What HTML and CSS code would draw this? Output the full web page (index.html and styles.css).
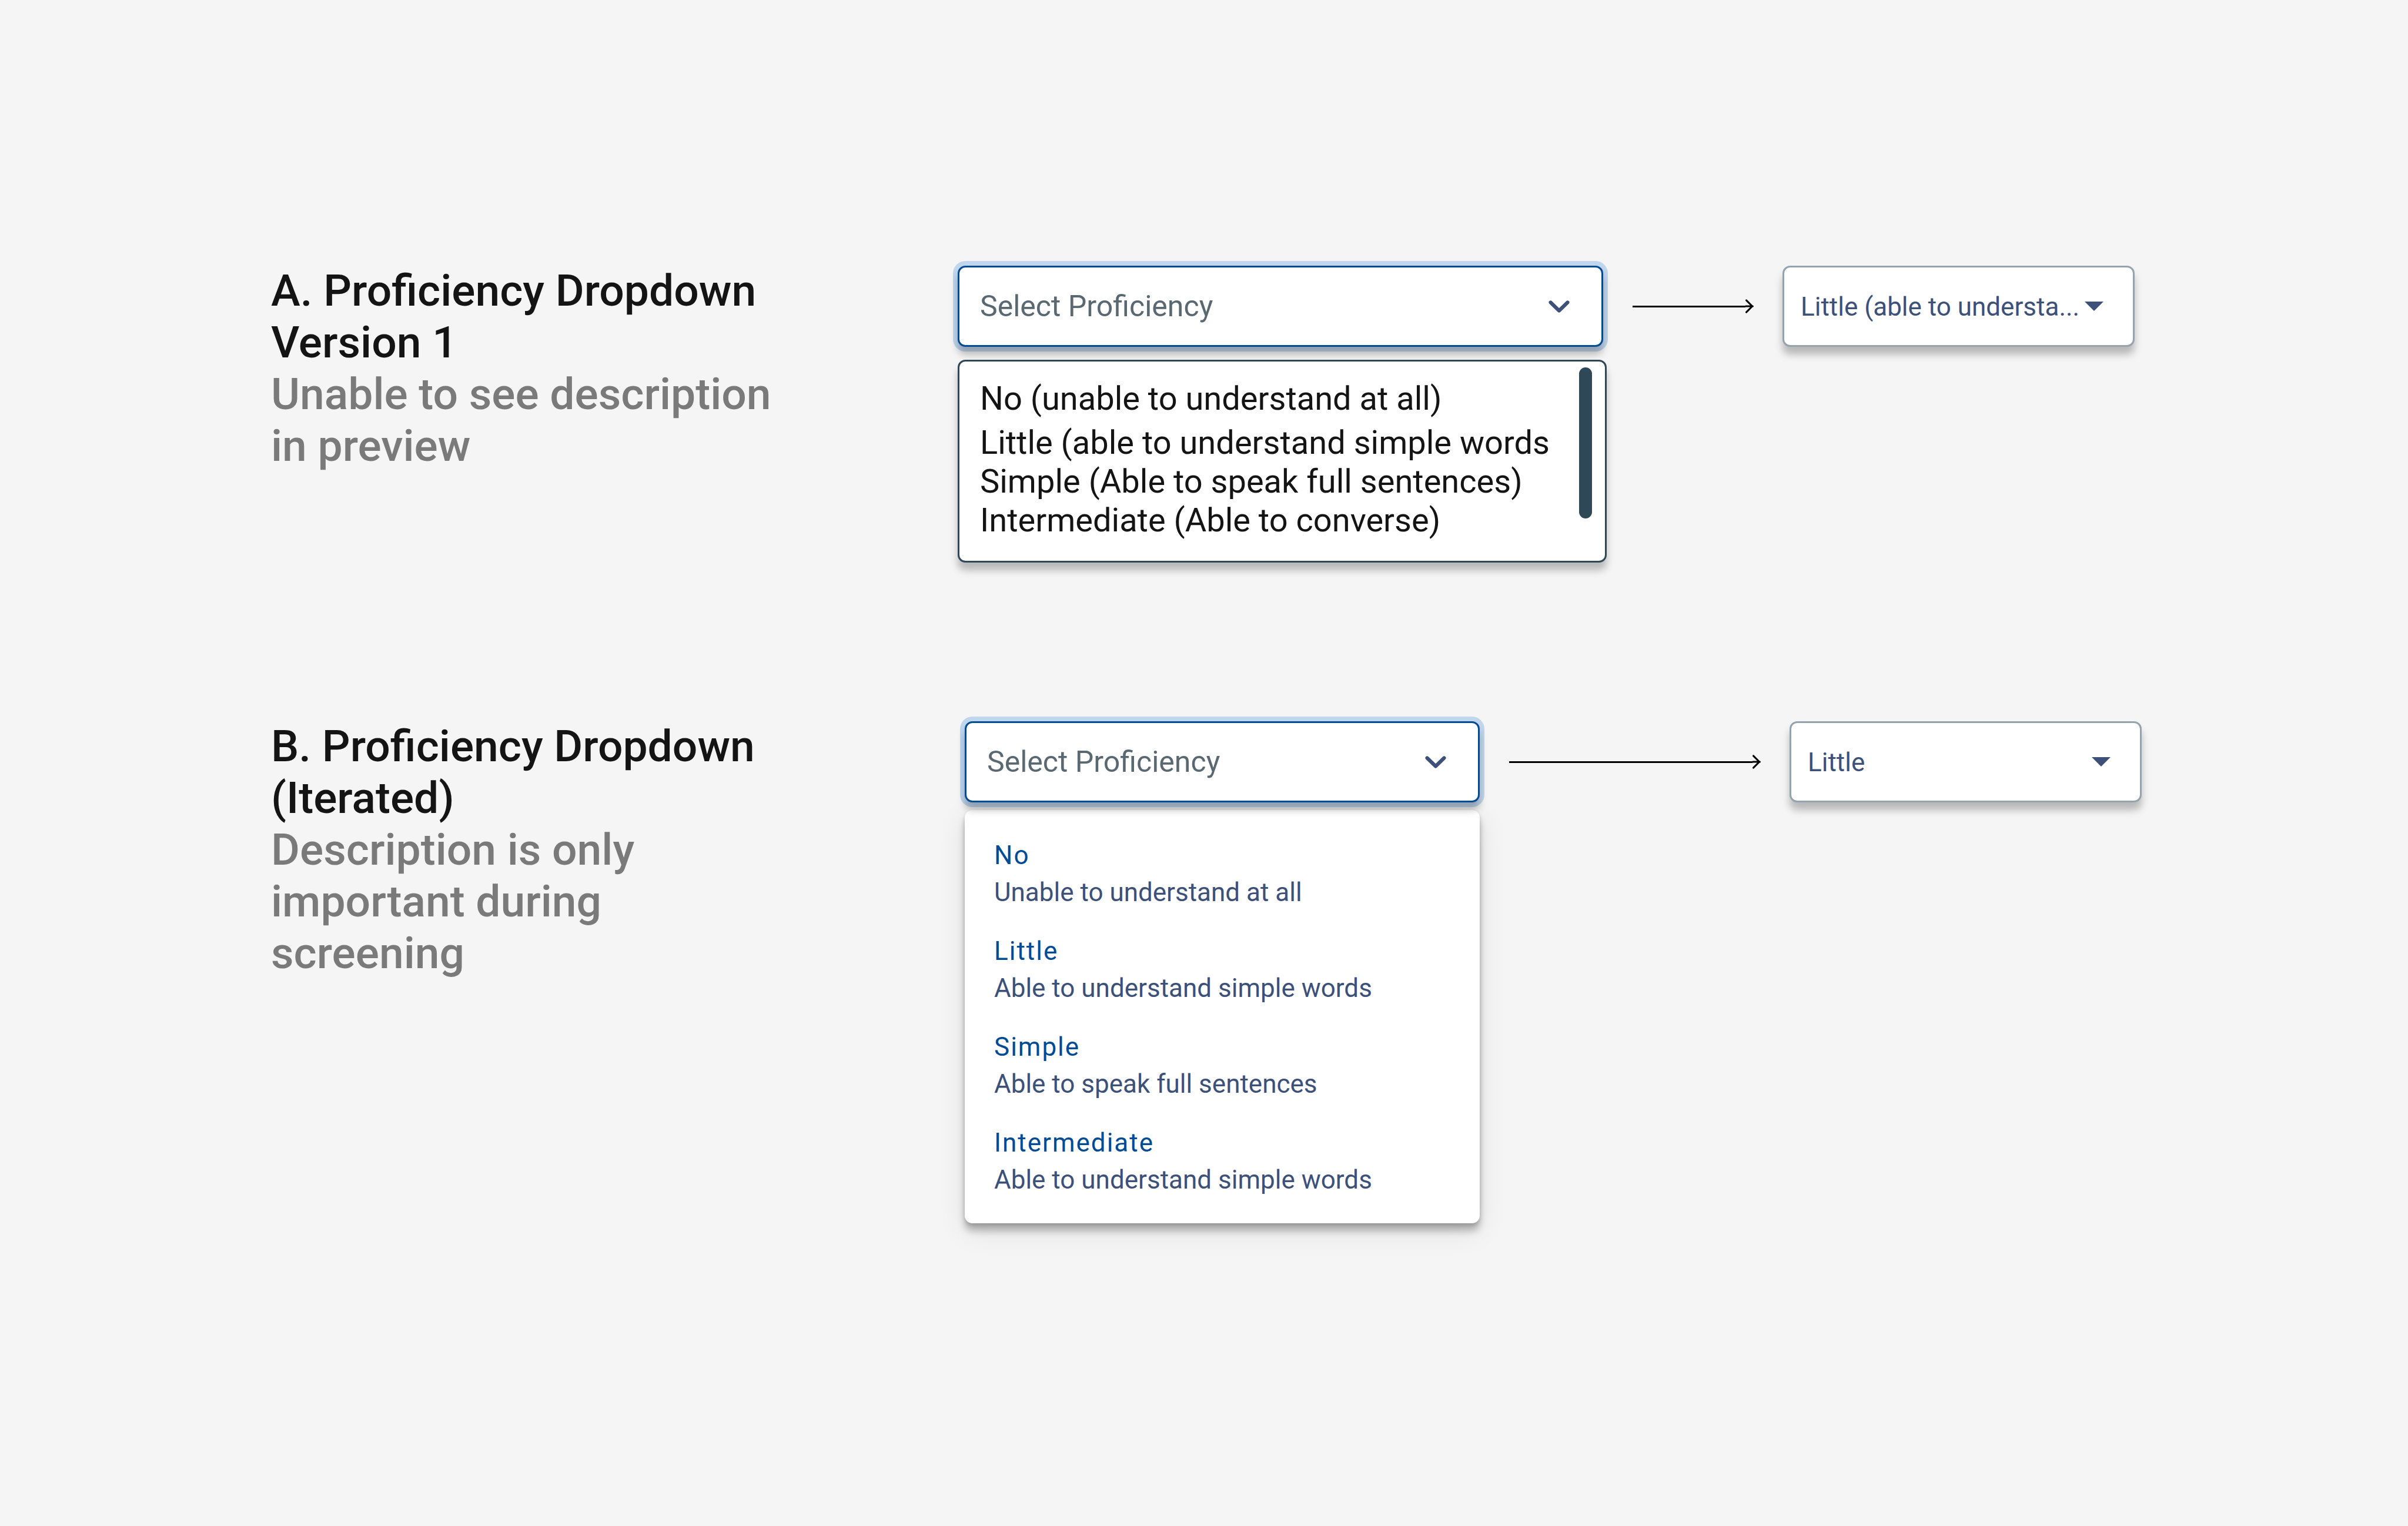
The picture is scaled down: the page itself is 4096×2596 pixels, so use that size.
FILE: index.html
```html
<!DOCTYPE html>
<html lang="en">
<head>
<meta charset="utf-8">
<title>Proficiency Dropdown</title>
<link rel="stylesheet" href="styles.css">
</head>
<body>
<main class="board">
  <section class="variant variant-a">
    <div class="caption">
      <h2 class="caption-title"><label for="proficiency-a">A. Proficiency Dropdown Version 1</label></h2>
      <p class="caption-note">Unable to see description in preview</p>
    </div>
    <div class="dropdown">
      <div class="field">
        <select class="control control-open" id="proficiency-a">
          <option>Select Proficiency</option>
        </select>
        <svg class="chevron" viewBox="0 0 46 27" aria-hidden="true"><path d="M4.500 4.500L23 22.500L41.500 4.500"/></svg>
      </div>
      <div class="list">
        <ul class="list-options">
          <li class="list-option">No (unable to understand at all)</li>
          <li class="list-option">Little (able to understand simple words</li>
          <li class="list-option">Simple (Able to speak full sentences)</li>
          <li class="list-option">Intermediate (Able to converse)</li>
        </ul>
        <span class="scrollbar"></span>
      </div>
    </div>
    <div class="arrow">
      <span class="arrow-line"></span>
      <svg class="arrow-head" viewBox="0 0 18 30" aria-hidden="true"><path d="M0 15H16M2 2L15 15L2 28"/></svg>
    </div>
    <div class="field">
      <select class="control control-preview" aria-label="Selected proficiency, version 1">
        <option>Little (able to understa...</option>
      </select>
      <svg class="caret" viewBox="0 0 40 20" aria-hidden="true"><path d="M0 0H40L20 20Z"/></svg>
    </div>
  </section>

  <section class="variant variant-b">
    <div class="caption">
      <h2 class="caption-title"><label for="proficiency-b">B. Proficiency Dropdown (Iterated)</label></h2>
      <p class="caption-note">Description is only important during screening</p>
    </div>
    <div class="dropdown">
      <div class="field">
        <select class="control control-open" id="proficiency-b">
          <option>Select Proficiency</option>
        </select>
        <svg class="chevron" viewBox="0 0 46 27" aria-hidden="true"><path d="M4.500 4.500L23 22.500L41.500 4.500"/></svg>
      </div>
      <ul class="menu">
        <li class="menu-item"><span class="menu-name">No</span><span class="menu-text">Unable to understand at all</span></li>
        <li class="menu-item"><span class="menu-name">Little</span><span class="menu-text">Able to understand simple words</span></li>
        <li class="menu-item"><span class="menu-name">Simple</span><span class="menu-text">Able to speak full sentences</span></li>
        <li class="menu-item"><span class="menu-name">Intermediate</span><span class="menu-text">Able to understand simple words</span></li>
      </ul>
    </div>
    <div class="arrow">
      <span class="arrow-line"></span>
      <svg class="arrow-head" viewBox="0 0 18 30" aria-hidden="true"><path d="M0 15H16M2 2L15 15L2 28"/></svg>
    </div>
    <div class="field">
      <select class="control control-preview" aria-label="Selected proficiency, iterated">
        <option>Little</option>
      </select>
      <svg class="caret" viewBox="0 0 40 20" aria-hidden="true"><path d="M0 0H40L20 20Z"/></svg>
    </div>
  </section>
</main>
</body>
</html>
```
FILE: styles.css
```css
:root {
  --ink: #141414;
  --muted: #7a7a7a;
  --blue: #004b93;
  --slate: #3d5078;
  --teal: #2f4858;
  --shadow: 0 13px 13px rgba(0, 0, 0, 0.25);
}

* {
  box-sizing: border-box;
}

body {
  margin: 0;
  background: #f5f5f5;
  color: var(--ink);
  font-family: Roboto, "Liberation Sans", sans-serif;
}

ul,
h2,
p {
  margin: 0;
  padding: 0;
  list-style: none;
}

.board {
  display: flex;
  flex-direction: column;
  gap: 270px;
  padding: 452px 0 452px 461px;
}

.variant {
  display: grid;
  align-items: start;
}

.variant-a {
  grid-template-columns: 1168fr 1098fr 305fr 599fr;
  margin-right: 465px;
}

.variant-b {
  grid-template-columns: 1180fr 876fr 527fr 599fr;
  margin-right: 453px;
}

.caption {
  max-width: 890px;
  margin-top: -2px;
  font-size: 75px;
  line-height: 88px;
}

.caption-title {
  font-size: 75px;
  font-weight: 500;
}

.caption-note {
  color: var(--muted);
  font-weight: 500;
}

.field {
  position: relative;
}

.control {
  display: block;
  appearance: none;
  width: 100%;
  height: 138px;
  margin: 0;
  border: 3px solid;
  border-radius: 13px;
  background: #fff;
  font-family: inherit;
  outline: none;
}

.control-open {
  padding: 0 96px 0 35px;
  border-color: var(--blue);
  color: #5a6872;
  font-size: 50px;
  box-shadow: var(--shadow), 0 0 0 8px #c0d6ec;
}

.control-preview {
  padding: 2px 84px 0 28px;
  border-color: #94a4ae;
  color: var(--slate);
  font-size: 44px;
  box-shadow: var(--shadow);
}

.chevron {
  position: absolute;
  top: 59px;
  right: 57px;
  width: 36px;
  height: 21px;
  fill: none;
  stroke: var(--slate);
  stroke-width: 8;
  stroke-linecap: round;
  stroke-linejoin: round;
  pointer-events: none;
}

.caret {
  position: absolute;
  top: 61px;
  right: 53px;
  width: 32px;
  height: 16px;
  fill: var(--slate);
  pointer-events: none;
}

.list {
  display: flex;
  justify-content: space-between;
  width: calc(100% + 6px);
  margin-top: 22px;
  padding: 0 22px 0 35px;
  border: 3px solid var(--teal);
  border-radius: 13px;
  background: #fff;
  box-shadow: var(--shadow);
}

.list-options {
  padding: 30px 0 36px;
}

.list-option {
  font-size: 56px;
  line-height: 66px;
  white-space: nowrap;
}

.list-option:first-child {
  margin-bottom: 9px;
}

.scrollbar {
  width: 22px;
  height: 257px;
  margin-top: 10px;
  border-radius: 11px;
  background: var(--teal);
}

.arrow {
  display: flex;
  align-items: center;
  height: 138px;
  padding: 0 49px 0 50px;
}

.arrow-line {
  flex: 1;
  height: 3px;
  background: #000;
}

.arrow-head {
  width: 14px;
  height: 24px;
  fill: none;
  stroke: #000;
  stroke-width: 4;
  stroke-linecap: round;
  stroke-linejoin: round;
}

.menu {
  display: flex;
  flex-direction: column;
  gap: 37px;
  margin-top: 13px;
  padding: 46px 50px 42px;
  border-radius: 13px;
  background: #fff;
  box-shadow: var(--shadow), 0 3px 6px rgba(0, 0, 0, 0.15), 0 13px 50px rgba(0, 0, 0, 0.09);
  font-size: 44px;
  line-height: 63px;
}

.menu-item {
  display: flex;
  flex-direction: column;
}

.menu-name {
  color: var(--blue);
  letter-spacing: 2px;
}

.menu-text {
  color: var(--slate);
}
```
